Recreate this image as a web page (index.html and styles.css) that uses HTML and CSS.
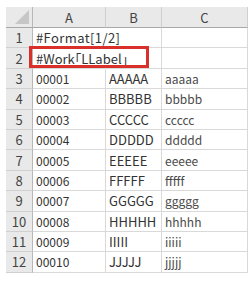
FILE: index.html
```html
<!DOCTYPE html>
<html>
<head>
<meta charset="utf-8">
<link rel="stylesheet" href="styles.css">
</head>
<body>
<div class="sheet">
  <div class="grid">
    <div class="corner"><span class="tri"></span></div>
    <div class="colh">A</div>
    <div class="colh">B</div>
    <div class="colh">C</div>

    <div class="rowh">1</div><div class="cell ov wide">#Format[1/2]</div><div class="cell"></div><div class="cell"></div>
    <div class="rowh">2</div><div class="cell ov">#Work｢LLabel｣</div><div class="cell"></div><div class="cell"></div>
    <div class="rowh">3</div><div class="cell num">00001</div><div class="cell">AAAAA</div><div class="cell lc">aaaaa</div>
    <div class="rowh">4</div><div class="cell num">00002</div><div class="cell">BBBBB</div><div class="cell lc">bbbbb</div>
    <div class="rowh">5</div><div class="cell num">00003</div><div class="cell">CCCCC</div><div class="cell lc">ccccc</div>
    <div class="rowh">6</div><div class="cell num">00004</div><div class="cell">DDDDD</div><div class="cell lc">ddddd</div>
    <div class="rowh">7</div><div class="cell num">00005</div><div class="cell">EEEEE</div><div class="cell lc">eeeee</div>
    <div class="rowh">8</div><div class="cell num">00006</div><div class="cell">FFFFF</div><div class="cell lc">fffff</div>
    <div class="rowh">9</div><div class="cell num">00007</div><div class="cell">GGGGG</div><div class="cell lc">ggggg</div>
    <div class="rowh">10</div><div class="cell num">00008</div><div class="cell">HHHHH</div><div class="cell lc">hhhhh</div>
    <div class="rowh">11</div><div class="cell num">00009</div><div class="cell">IIIII</div><div class="cell lc">iiiii</div>
    <div class="rowh">12</div><div class="cell num">00010</div><div class="cell">JJJJJ</div><div class="cell lc">jjjjj</div>
  </div>
  <div class="highlight"></div>
</div>
</body>
</html>
```
FILE: styles.css
```css
html, body {
  margin: 0;
  padding: 0;
  background: #ffffff;
}
body {
  font-family: "Noto Sans CJK JP", "Noto Sans", sans-serif;
  color: #333333;
}
.sheet {
  position: relative;
  padding: 7px 0 0 6px;
}
.grid {
  display: grid;
  grid-template-columns: 27px 73px 56px 86px;
  grid-template-rows: 21px repeat(12, 20.4px);
}
.corner {
  position: relative;
  background: #e9e9e9;
  border-right: 1px solid #b8b8b8;
  border-bottom: 1px solid #a8a8a8;
}
.tri {
  position: absolute;
  right: 3px;
  bottom: 3px;
  width: 0;
  height: 0;
  border-left: 14px solid transparent;
  border-bottom: 14px solid #c6c6c6;
}
.colh {
  background: #e9e9e9;
  border-right: 1px solid #cfcfcf;
  border-bottom: 1px solid #a8a8a8;
  display: flex;
  align-items: center;
  justify-content: center;
  font-size: 13px;
  color: #444444;
}
.rowh {
  background: #e9e9e9;
  border-right: 1px solid #b8b8b8;
  border-bottom: 1px solid #d0d0d0;
  display: flex;
  align-items: center;
  justify-content: center;
  font-size: 13px;
  color: #444444;
}
.cell {
  border-right: 1px solid #d9d9d9;
  border-bottom: 1px solid #d9d9d9;
  display: flex;
  align-items: center;
  padding-left: 3px;
  font-size: 13px;
  white-space: nowrap;
  min-width: 0;
}
.ov {
  overflow: visible;
  border-right-color: transparent;
  position: relative;
  z-index: 1;
}
.wide {
  letter-spacing: 0.4px;
}
.num {
  font-size: 12px;
}
.lc {
  font-size: 12px;
  color: #4a4a4a;
}
.highlight {
  position: absolute;
  left: 29px;
  top: 46px;
  width: 120px;
  height: 22px;
  box-sizing: border-box;
  border: 3px solid #d9302b;
  z-index: 2;
}
```
